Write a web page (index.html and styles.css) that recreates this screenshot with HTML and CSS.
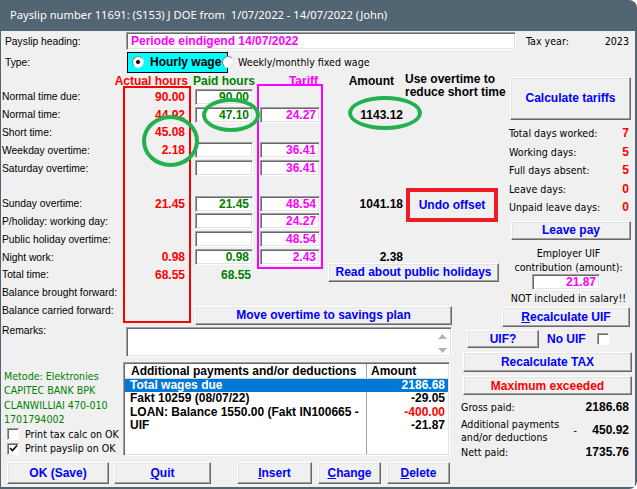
FILE: index.html
```html
<!DOCTYPE html>
<html lang="en">
<head>
    <meta charset="UTF-8">
    <title>Payslip</title>
    <link rel="stylesheet" href="styles.css">
</head>
<body>
<div class="window">
    <div class="titlebar">Payslip number 11691: (S153) J DOE from&nbsp; 1/07/2022 - 14/07/2022 (John)</div>
    <div class="client">

        <div class="heading-row">
            <span class="lbl">Payslip heading:</span>
            <div class="field heading-field">Periode eindigend 14/07/2022</div>
            <span class="n tax-lbl">Tax year:</span>
            <span class="n tax-val">2023</span>
        </div>

        <div class="type-row">
            <span class="lbl">Type:</span>
            <div class="hourly"><span class="radio on"></span>Hourly wage</div>
            <span class="radio"></span>
            <span class="n weekly">Weekly/monthly fixed wage</span>
        </div>

        <div class="hours">
            <span class="hd hd-actual">Actual hours</span>
            <span class="hd hd-paid">Paid hours</span>
            <span class="hd hd-tariff">Tariff</span>
            <span class="hd hd-amount">Amount</span>
            <span class="hd hd-note">Use overtime to<br>reduce short time</span>

            <div class="box-actual"></div>
            <div class="box-tariff"></div>

            <!-- labels -->
            <span class="lbl r1">Normal time due:</span>
            <span class="lbl r2">Normal time:</span>
            <span class="lbl r3">Short time:</span>
            <span class="lbl r4">Weekday overtime:</span>
            <span class="lbl r5">Saturday overtime:</span>
            <span class="lbl r7">Sunday overtime:</span>
            <span class="lbl r8">P/holiday: working day:</span>
            <span class="lbl r9">Public holiday overtime:</span>
            <span class="lbl r10">Night work:</span>
            <span class="lbl r11">Total time:</span>
            <span class="lbl r12">Balance brought forward:</span>
            <span class="lbl r13">Balance carried forward:</span>

            <!-- actual hours -->
            <span class="act r1">90.00</span>
            <span class="act r2">44.92</span>
            <span class="act r3">45.08</span>
            <span class="act r4">2.18</span>
            <span class="act r7">21.45</span>
            <span class="act r10">0.98</span>
            <span class="act r11">68.55</span>

            <!-- paid hours -->
            <div class="field paid r1">90.00</div>
            <div class="field paid r2">47.10</div>
            <div class="field paid r4"></div>
            <div class="field paid r5"></div>
            <div class="field paid r7">21.45</div>
            <div class="field paid r8"></div>
            <div class="field paid r9"></div>
            <div class="field paid r10">0.98</div>
            <span class="paid-total r11">68.55</span>

            <!-- tariffs -->
            <div class="field tariff r2">24.27</div>
            <div class="field tariff r4">36.41</div>
            <div class="field tariff r5">36.41</div>
            <div class="field tariff r7">48.54</div>
            <div class="field tariff r8">24.27</div>
            <div class="field tariff r9">48.54</div>
            <div class="field tariff r10">2.43</div>

            <!-- amounts -->
            <span class="amt r2">1143.12</span>
            <span class="amt r7">1041.18</span>
            <span class="amt r10">2.38</span>

            <button class="undo-btn">Undo offset</button>
            <button class="btn holidays-btn">Read about public holidays</button>
            <button class="btn savings-btn">Move overtime to savings plan</button>

            <div class="side">
                <button class="btn calc-btn">Calculate tariffs</button>
                <div class="stats n">
                    <div class="stat"><span>Total days worked:</span><b>7</b></div>
                    <div class="stat"><span>Working days:</span><b>5</b></div>
                    <div class="stat"><span>Full days absent:</span><b>5</b></div>
                    <div class="stat"><span>Leave days:</span><b>0</b></div>
                    <div class="stat"><span>Unpaid leave days:</span><b>0</b></div>
                </div>
                <button class="btn leave-btn">Leave pay</button>
                <div class="uif-info n">Employer UIF<br>contribution (amount):</div>
                <div class="field uif-amount">21.87</div>
                <div class="not-incl n">NOT included in salary!!</div>
                <button class="btn recalc-uif"><u>R</u>ecalculate UIF</button>
            </div>

            <!-- annotations -->
            <div class="mark mark-short"></div>
            <div class="mark mark-paid"></div>
            <div class="mark mark-amount"></div>
        </div>

        <div class="lower">
            <div class="lower-left">
                <div class="remarks-row">
                    <span class="lbl">Remarks:</span>
                    <div class="field remarks">
                        <svg class="scroll-arrows" width="9" height="20" viewBox="0 0 9 20">
                            <path d="M4.5 0 L9 5 L0 5 Z" fill="#b4b4b4"/>
                            <path d="M0 14 L9 14 L4.5 19 Z" fill="#b4b4b4"/>
                        </svg>
                    </div>
                </div>
                <div class="lower-main">
                    <div class="bank n">
                        <div>Metode: Elektronies</div>
                        <div>CAPITEC BANK BPK</div>
                        <div>CLANWILLIAI 470-010</div>
                        <div>1701794002</div>
                        <label class="opt"><span class="check"></span>Print tax calc on OK</label>
                        <label class="opt"><span class="check">
                            <svg width="9" height="9" viewBox="0 0 9 9"><path d="M1 4 L3.5 6.5 L8 1.5" fill="none" stroke="#000" stroke-width="1.6"/></svg>
                        </span>Print payslip on OK</label>
                    </div>
                    <div class="field list">
                        <div class="lrow lhead"><span class="lc1">Additional payments and/or deductions</span><span class="lc2">Amount</span></div>
                        <div class="lrow sel"><span class="lc1">Total wages due</span><span class="lc2">2186.68</span></div>
                        <div class="lrow"><span class="lc1">Fakt 10259 (08/07/22)</span><span class="lc2">-29.05</span></div>
                        <div class="lrow"><span class="lc1">LOAN: Balance 1550.00 (Fakt IN100665 -</span><span class="lc2 neg">-400.00</span></div>
                        <div class="lrow"><span class="lc1">UIF</span><span class="lc2">-21.87</span></div>
                    </div>
                </div>
            </div>

            <div class="lower-right">
                <div class="uif-row">
                    <button class="btn uif-btn">UIF?</button>
                    <span class="no-uif">No UIF</span>
                    <span class="check"></span>
                </div>
                <button class="btn tax-btn">Recalculate TAX</button>
                <button class="btn max-btn">Maximum exceeded</button>
                <div class="summary n">
                    <span>Gross paid:</span><span></span><b>2186.68</b>
                    <span>Additional payments<br>and/or deductions</span><span class="dash">-</span><b>450.92</b>
                    <span>Nett paid:</span><span></span><b>1735.76</b>
                </div>
            </div>
        </div>

        <div class="buttons">
            <button class="btn ok-btn">OK (Save)</button>
            <button class="btn quit-btn"><u>Q</u>uit</button>
            <button class="btn insert-btn"><u>I</u>nsert</button>
            <button class="btn change-btn"><u>C</u>hange</button>
            <button class="btn delete-btn"><u>D</u>elete</button>
        </div>
    </div>
</div>
</body>
</html>
```

FILE: styles.css
```css
* {
    margin: 0;
    padding: 0;
    box-sizing: border-box;
}

body {
    background: #fff;
    font-family: "Liberation Sans", Arial, sans-serif;
    font-size: 10.3px;
    color: #000;
}

/* narrow windows font */
.n {
    font-family: "DejaVu Sans Condensed", "Liberation Sans", sans-serif;
    font-size: 10.6px;
}

.window {
    width: 637px;
    height: 489px;
    background: #526573;
    border-radius: 0 8px 8px 0;
    overflow: hidden;
}

.titlebar {
    height: 31px;
    padding-left: 10px;
    color: #fff;
    font-family: "Noto Sans", sans-serif;
    font-size: 11.2px;
    line-height: 30px;
    white-space: nowrap;
}

.client {
    background: #f0f0f0;
    margin: 0 2px 0 1px;
    height: 456px;
    padding-top: 1px;
}

/* common controls */
.field {
    background: #fff;
    border: 1px solid;
    border-color: #a0a0a0 #fff #fff #a0a0a0;
    box-shadow: inset 1px 1px 0 #696969, inset -1px -1px 0 #e3e3e3;
}

.btn {
    display: flex;
    align-items: center;
    justify-content: center;
    background: #f0f0f0;
    border: 1px solid;
    border-color: #fff #696969 #696969 #fff;
    box-shadow: inset -1px -1px 0 #a0a0a0, inset 1px 1px 0 #e3e3e3;
    color: #0000ff;
    font-family: "Liberation Sans", Arial, sans-serif;
    font-weight: bold;
    font-size: 12px;
    white-space: nowrap;
}

.radio {
    width: 12px;
    height: 12px;
    flex: none;
    border-radius: 50%;
    background: #fff;
    border: 1px solid;
    border-color: #808080 #e3e3e3 #e3e3e3 #808080;
    display: flex;
    align-items: center;
    justify-content: center;
}

.radio.on::after {
    content: "";
    width: 4px;
    height: 4px;
    border-radius: 50%;
    background: #000;
}

.check {
    width: 12px;
    height: 12px;
    flex: none;
    background: #fff;
    border: 1px solid;
    border-color: #a0a0a0 #fff #fff #a0a0a0;
    box-shadow: inset 1px 1px 0 #696969;
    display: flex;
    align-items: center;
    justify-content: center;
}

/* top rows */
.heading-row {
    display: flex;
    align-items: center;
    height: 18px;
}

.heading-row .lbl {
    width: 125px;
    padding-left: 4px;
}

.heading-field {
    width: 390px;
    height: 18px;
    padding-left: 4px;
    color: #ff00ff;
    font-weight: bold;
    font-size: 12px;
    line-height: 16px;
}

.tax-lbl {
    margin-left: 10px;
}

.tax-val {
    flex: 1;
    text-align: right;
    padding-right: 6px;
}

.type-row {
    display: flex;
    align-items: center;
    height: 22px;
    margin-top: 1px;
}

.type-row .lbl {
    width: 126px;
    padding-left: 4px;
}

.hourly {
    display: flex;
    align-items: center;
    gap: 6px;
    width: 101px;
    height: 21px;
    padding-left: 4px;
    background: #00ffff;
    border: 1px solid #000;
    font-weight: bold;
    font-size: 12px;
}

.type-row > .radio {
    margin-left: -6px;
}

.weekly {
    margin-left: 4px;
}

/* hours grid */
.hours {
    position: relative;
    display: grid;
    grid-template-columns: 122px 68px 66px 66px 82px 97px 133px;
    grid-template-rows: 15px repeat(13, 17.8px) 7.6px;
    height: 254px;
}

.r1 { grid-row: 2; }
.r2 { grid-row: 3; }
.r3 { grid-row: 4; }
.r4 { grid-row: 5; }
.r5 { grid-row: 6; }
.r7 { grid-row: 8; }
.r8 { grid-row: 9; }
.r9 { grid-row: 10; }
.r10 { grid-row: 11; }
.r11 { grid-row: 12; }
.r12 { grid-row: 13; }
.r13 { grid-row: 14; }

.hd {
    grid-row: 1;
    align-self: center;
    font-weight: bold;
    font-size: 12px;
    line-height: 14px;
    white-space: nowrap;
}

.hd-actual {
    grid-column: 1 / 3;
    justify-self: end;
    padding-right: 3px;
    color: #ff0000;
}

.hd-paid {
    grid-column: 3;
    justify-self: center;
    color: #008000;
}

.hd-tariff {
    grid-column: 4;
    justify-self: end;
    padding-right: 5px;
    color: #ff00ff;
}

.hd-amount {
    grid-column: 5;
    justify-self: end;
    padding-right: 11px;
}

.hd-note {
    grid-column: 6;
    grid-row: 1 / 3;
    align-self: start;
    line-height: 13px;
}

.box-actual {
    grid-column: 2;
    grid-row: 2 / 15;
    margin: -2px 0 -3.6px 0;
    border: 2px solid #ff0000;
}

.box-tariff {
    grid-column: 4;
    grid-row: 2 / 12;
    margin: -4px 0 -3px 0;
    border: 2px solid #ff00ff;
}

.hours .lbl {
    grid-column: 1;
    align-self: center;
    padding-left: 1px;
    white-space: nowrap;
}

.act {
    grid-column: 2;
    align-self: center;
    justify-self: end;
    padding-right: 6px;
    color: #ff0000;
    font-weight: bold;
    font-size: 12px;
}

.paid,
.tariff {
    align-self: center;
    height: 16px;
    padding-right: 3px;
    text-align: right;
    font-weight: bold;
    font-size: 12px;
    line-height: 14px;
}

.paid {
    grid-column: 3;
    margin: 0 4px;
    color: #008000;
}

.tariff {
    grid-column: 4;
    margin: 0 3px;
    color: #ff00ff;
}

.paid-total {
    grid-column: 3;
    align-self: center;
    justify-self: end;
    padding-right: 6px;
    color: #008000;
    font-weight: bold;
    font-size: 12px;
}

.amt {
    grid-column: 5;
    align-self: center;
    justify-self: end;
    padding-right: 2px;
    font-weight: bold;
    font-size: 12px;
}

.undo-btn {
    grid-column: 6;
    grid-row: 7 / 10;
    align-self: center;
    width: 92px;
    height: 34px;
    margin: 3px 0 0 1px;
    background: #f0f0f0;
    border: 4px solid #ed1c24;
    color: #0000ff;
    font-family: "Liberation Sans", Arial, sans-serif;
    font-weight: bold;
    font-size: 12px;
}

.holidays-btn {
    grid-column: 5 / 7;
    grid-row: 12;
    align-self: start;
    height: 19px;
    margin: -3px 3px 0 5px;
}

.savings-btn {
    grid-column: 3 / 7;
    grid-row: 14;
    align-self: start;
    height: 19px;
    margin: 4px 50px 0 4px;
}

/* right side panel */
.side {
    grid-column: 7;
    grid-row: 1 / -1;
    display: flex;
    flex-direction: column;
}

.calc-btn {
    width: 121px;
    height: 43px;
    margin: 4px 0 0 8px;
}

.stats {
    margin-top: 4px;
}

.stat {
    display: flex;
    justify-content: space-between;
    align-items: center;
    height: 18.5px;
    padding: 0 6px 0 7px;
}

.stat b {
    color: #ff0000;
    font-family: "Liberation Sans", Arial, sans-serif;
    font-size: 12px;
}

.leave-btn {
    width: 120px;
    height: 19px;
    margin: 4.5px 0 0 9px;
}

.uif-info {
    margin-top: 6px;
    line-height: 14px;
    text-align: center;
}

.uif-amount {
    width: 68px;
    height: 16px;
    margin-left: 30px;
    padding-right: 3px;
    text-align: right;
    color: #ff00ff;
    font-weight: bold;
    font-size: 12px;
    line-height: 14px;
}

.not-incl {
    margin-top: 1px;
    line-height: 14px;
    text-align: center;
    white-space: nowrap;
}

.recalc-uif {
    width: 128px;
    height: 20px;
    margin-top: 2px;
}

/* annotations drawn over the form */
.mark {
    position: absolute;
    border: 4px solid #22b14c;
    border-radius: 50%;
}

.mark-short {
    left: 141px;
    top: 42px;
    width: 57px;
    height: 52px;
}

.mark-paid {
    left: 201px;
    top: 25px;
    width: 58px;
    height: 34px;
}

.mark-amount {
    left: 347px;
    top: 23px;
    width: 74px;
    height: 34px;
}

/* lower part */
.lower {
    display: flex;
    height: 135px;
}

.lower-left {
    width: 454px;
}

.remarks-row {
    display: flex;
    height: 30px;
}

.remarks-row .lbl {
    width: 125px;
    padding-left: 1px;
    line-height: 14px;
    margin-top: -3px;
}

.remarks {
    position: relative;
    width: 326px;
    height: 30px;
}

.scroll-arrows {
    position: absolute;
    right: 4px;
    top: 6px;
}

.lower-main {
    display: flex;
    margin-top: 5px;
}

.bank {
    width: 122px;
    padding: 6.75px 0 0 3px;
    color: #008000;
    line-height: 14.5px;
    white-space: nowrap;
}

.opt {
    display: flex;
    align-items: center;
    gap: 6px;
    height: 14.5px;
    margin-left: 3px;
    color: #000;
}

.list {
    width: 327px;
    height: 94px;
    padding: 1px;
    background: linear-gradient(#a0a0a0, #a0a0a0) 242px 0 / 1px 100% no-repeat, #fff;
    font-weight: bold;
    font-size: 12px;
}

.lrow {
    display: flex;
    height: 13.4px;
    line-height: 13.4px;
    white-space: nowrap;
}

.lhead {
    height: 15px;
    line-height: 15px;
    background: #fff;
    border-bottom: 1px solid #d8d8d8;
}

.lhead .lc1 {
    padding-left: 6px;
    border-right: 1px solid #a0a0a0;
}

.lhead .lc2 {
    text-align: left;
    padding-left: 4px;
}

.lc1 {
    width: 242px;
    overflow: hidden;
    padding-left: 5px;
}

.lc2 {
    flex: 1;
    text-align: right;
    padding-right: 3px;
}

.sel {
    background: #0078d7;
    color: #fff;
}

.neg {
    color: #ff0000;
}

.lower-right {
    width: 180px;
}

.uif-row {
    display: flex;
    align-items: center;
    margin-top: 3px;
    height: 18px;
}

.uif-btn {
    width: 72px;
    height: 18px;
    margin-left: 12px;
}

.no-uif {
    margin: 0 11px 0 8px;
    color: #0000ff;
    font-weight: bold;
    font-size: 12px;
}

.tax-btn,
.max-btn {
    width: 169px;
    height: 20px;
    margin: 4px 0 0 8px;
}

.max-btn {
    height: 19px;
    color: #ff0000;
}

.summary {
    display: grid;
    grid-template-columns: 1fr 20px auto;
    grid-template-rows: 17px 29px 14px;
    align-items: center;
    padding: 4px 6px 0 6px;
    line-height: 13px;
}

.summary b {
    font-family: "Liberation Sans", Arial, sans-serif;
    font-size: 12px;
    text-align: right;
}

.dash {
    padding-left: 8px;
}

.buttons {
    display: flex;
    height: 22px;
    padding-left: 6px;
}

.buttons .btn {
    height: 22px;
}

.ok-btn { width: 102px; }
.quit-btn { width: 97px; margin-left: 5px; }
.insert-btn { width: 75px; margin-left: 26px; }
.change-btn { width: 63px; margin-left: 6px; }
.delete-btn { width: 63px; margin-left: 6px; }
```
